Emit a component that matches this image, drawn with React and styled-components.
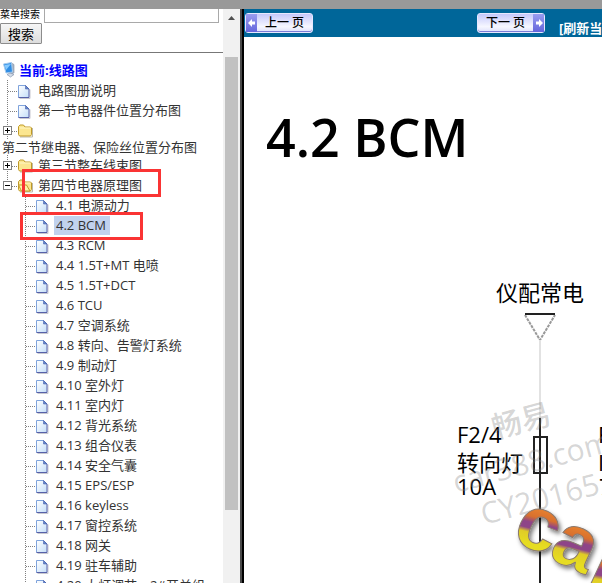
import React from 'react';
import styled, { createGlobalStyle, css } from 'styled-components';

const sections = [
  { id: 's0', title: '电路图册说明', type: 'page' },
  { id: 's1', title: '第一节电器件位置分布图', type: 'page' },
  { id: 's2', title: '第二节继电器、保险丝位置分布图', type: 'folder', wrap: true },
  { id: 's3', title: '第三节整车线束图', type: 'folder' },
  { id: 's4', title: '第四节电器原理图', type: 'folder', open: true, marked: true },
];

const diagrams = [
  '4.1 电源动力',
  '4.2 BCM',
  '4.3 RCM',
  '4.4 1.5T+MT 电喷',
  '4.5 1.5T+DCT',
  '4.6 TCU',
  '4.7 空调系统',
  '4.8 转向、告警灯系统',
  '4.9 制动灯',
  '4.10 室外灯',
  '4.11 室内灯',
  '4.12 背光系统',
  '4.13 组合仪表',
  '4.14 安全气囊',
  '4.15 EPS/ESP',
  '4.16 keyless',
  '4.17 窗控系统',
  '4.18 网关',
  '4.19 驻车辅助',
  '4.20 大灯调节、2#开关组',
];

const GlobalStyle = createGlobalStyle`
  * {
    box-sizing: border-box;
  }

  body {
    margin: 0;
    background: #fff;
    font-family: 'Open Sans', 'Noto Sans CJK SC', sans-serif;
    font-size: 13px;
    color: #333;
  }
`;

const Page = styled.div`
  height: 100vh;
  overflow: hidden;

  display: flex;
  flex-direction: column;
`;

const TopStrip = styled.div`
  flex: none;
  height: 9px;
  background: #999;
`;

const Frames = styled.div`
  flex: 1;
  min-height: 0;
  display: flex;
`;

const Sidebar = styled.aside`
  flex: none;
  width: 244px;
  display: flex;

  border-right: 2px solid #000;
  box-shadow: inset -2px 0 0 #4a4a4a;
  padding-right: 2px;
`;

const SidebarContent = styled.div`
  flex: 1;
  min-width: 0;
  overflow: hidden;
`;

const SearchForm = styled.form`
  margin-top: -8px;
  padding-bottom: 8px;
  border-bottom: 1px solid #777;

  & .field {
    display: flex;
    align-items: center;
    gap: 4px;
    height: 22px;
  }

  & label {
    flex: none;
    width: 40px;
    padding-top: 4px;
    font-size: 10px;
    line-height: 14px;
    color: #000;
    white-space: nowrap;
  }

  & input {
    width: 175px;
    height: 22px;
    padding: 0 4px;
    border: 1px solid #a9a9a9;
    background: #fff;
    outline: none;
  }
`;

const SearchButton = styled.button`
  display: block;
  width: 42px;
  height: 21px;
  padding: 0;

  border: 1px solid #8c8c8c;
  border-radius: 1px;
  background: linear-gradient(#f6f6f6, #dddddd);

  font-family: inherit;
  font-size: 13px;
  line-height: 18px;
  color: #000;
`;

const Tree = styled.ul`
  list-style: none;
  margin: 0;
  padding: 0;
`;

const TreeRoot = styled.a`
  display: flex;
  align-items: center;
  gap: 1px;
  height: 20px;
  margin: 6px 0 1px;
  padding-left: 2px;

  font-weight: 700;
  color: #0000ff;
  text-decoration: none;
`;

const TreeRow = styled.div`
  position: relative;
  display: flex;
  flex-wrap: wrap;
  align-items: center;
  min-height: 20px;
  padding-left: ${({ $level }) => ($level === 2 ? '18px' : '0')};
`;

const Joint = styled.span`
  flex: none;
  width: 18px;
  height: 20px;
  padding-top: 5px;
  padding-left: 3px;

  background:
    repeating-linear-gradient(#808080 0 1px, transparent 1px 2px) 7px 0 / 1px ${({ $last }) => ($last ? '12px' : '100%')} no-repeat,
    repeating-linear-gradient(90deg, #808080 0 1px, transparent 1px 2px) 8px 11px / 10px 1px no-repeat;
`;

const Toggle = styled.button`
  display: grid;
  place-items: center;
  width: 9px;
  height: 9px;
  margin-top: 1px;
  padding: 0;
  border: 1px solid #808080;
  background: #fff;
`;

const RowLink = styled.a`
  padding: 0 4px 0 2px;
  line-height: 19px;
  color: #333;
  text-decoration: none;
  white-space: nowrap;

  ${({ $selected }) =>
    $selected &&
    css`
      background: #c1d2ee;
    `}

  ${({ $wrap }) =>
    $wrap &&
    css`
      width: 100%;
      line-height: 15px;
    `}
`;

const Mark = styled.span`
  position: absolute;
  z-index: 1;
  height: 28px;
  border: 3px solid #fa3434;
  pointer-events: none;

  ${({ $kind }) =>
    $kind === 'section'
      ? css`
          top: -6px;
          left: 22px;
          width: 139px;
        `
      : css`
          top: -3px;
          left: 20px;
          width: 123px;
        `}
`;

const Scrollbar = styled.div`
  flex: none;
  width: 17px;
  padding: 0 2px;
  background: #f1f1f1;

  & .arrow {
    height: 48px;
    padding-top: 7px;
    text-align: center;
  }

  & .arrow svg {
    display: block;
    margin: 0 auto;
  }

  & .thumb {
    height: 79%;
    background: #c1c1c1;
  }
`;

const Main = styled.main`
  flex: 1;
  min-width: 0;
  overflow: hidden;
  background: #fff;
`;

const Toolbar = styled.nav`
  display: flex;
  align-items: center;
  height: 28px;
  padding-left: 1px;
  background: #006699;
  white-space: nowrap;

  & a {
    padding-top: 9px;
    font-size: 13px;
    font-weight: 700;
    line-height: 18px;
    color: #fff;
    text-decoration: none;
  }
`;

const PageButton = styled.button`
  flex: none;
  display: flex;
  flex-direction: ${({ $next }) => ($next ? 'row-reverse' : 'row')};
  align-items: stretch;
  width: 68px;
  height: 20px;
  padding: 0;
  margin-right: ${({ $next }) => ($next ? '14px' : '164px')};

  border: 1px solid #e6e8ff;
  border-radius: 3px;
  background: linear-gradient(#c5c8fb, #f6f7ff 70%, #dfe1fb);
  box-shadow: inset 0 -1px 0 #7c7cd6;

  font-family: inherit;
  font-size: 12px;
  font-weight: 500;
  line-height: 18px;
  color: #000;

  & .side {
    display: grid;
    place-items: center;
    width: 11px;
    background: linear-gradient(#9a9df0, #6465dc);
  }

  & .text {
    flex: 1;
  }
`;

const DiagramTitle = styled.h1`
  margin: 0;
  padding: 68px 22px 31px;

  font-size: 52px;
  font-weight: 600;
  line-height: 64px;
  color: #000;
  white-space: nowrap;
`;

const Schematic = styled.svg`
  display: block;
  overflow: visible;
  font-family: 'Open Sans', 'Noto Sans CJK SC', sans-serif;

  & .label {
    font-size: 22px;
    fill: #000;
  }

  & .watermark {
    font-size: 30px;
    font-weight: 500;
    fill: #808080;
    fill-opacity: 0.32;
  }

  & .logo {
    font-family: 'Liberation Sans', sans-serif;
    font-size: 76px;
    font-weight: 700;
    fill: url(#rainbow);
    stroke: #8a7a70;
    stroke-width: 1px;
  }
`;

const ComputerIcon = () => (
  <svg width="16" height="18" viewBox="0 0 16 18">
    <path d="M9.500 3l2.500 1.500v8l-3 3-1-3z" fill="#a9b4c4" stroke="#8490a5" strokeWidth=".6" />
    <path d="M1.500 4l8-1.500 1 9.500-6.500 1z" fill="#2f8de4" stroke="#a6cbee" />
    <path d="M2.500 5l6.500-1-5 6z" fill="#86caff" />
    <path d="M5 14.500l3-1.500 4 1.500-3.500 2.500z" fill="#d3dce8" stroke="#8596b0" strokeWidth=".7" />
  </svg>
);

const PageIcon = () => (
  <svg width="18" height="18" viewBox="0 0 18 18">
    <defs>
      <linearGradient id="sheet" x1="0" y1="0" x2="1" y2="1">
        <stop offset="0" stopColor="#fff" />
        <stop offset="1" stopColor="#c4def8" />
      </linearGradient>
    </defs>
    <path d="M1.500 17.500h10.500v-9" fill="none" stroke="#c8c8d0" />
    <path d="M.5 4.500h7l3.500 3.500v8.500H.5z" fill="url(#sheet)" />
    <path d="M.5 16.500v-12h7" fill="none" stroke="#7fa3dc" />
    <path d="M7.500 4.500l3.500 3.500v8.500H.5" fill="none" stroke="#5661a8" />
    <path d="M7.500 4.500v3.500h3.500z" fill="#6487cb" stroke="#4e65af" strokeWidth=".6" />
  </svg>
);

const FolderIcon = ({ open }) => (
  <svg width="18" height="18" viewBox="0 0 18 18">
    <path d="M2 16h12.500v-9" fill="none" stroke="#bcb9aa" />
    <path d="M.5 13.500V5.500l1.500-1.500h3.500l1.500 2h5.500l1 1v6.500l-1 1.500h-11z" fill="#fbe690" stroke="#c09a28" />
    <path d="M1.500 7h11" stroke="#fff6c4" />
    {open && <path d="M.5 9h8l3.500 6H3.500z" fill="#fff3a8" stroke="#c09a28" />}
  </svg>
);

const ToggleIcon = ({ open }) => (
  <svg width="7" height="7" viewBox="0 0 7 7">
    <path d={open ? 'M1 3.5h5' : 'M1 3.5h5M3.5 1v5'} stroke="#000" />
  </svg>
);

const ArrowIcon = ({ next }) => (
  <svg width="8" height="10" viewBox="0 0 8 10">
    <path d={next ? 'M8 5L4 1v2.500H1v3h3V9z' : 'M0 5l4-4v2.500h3v3H4V9z'} fill="#fff" />
  </svg>
);

const MenuTree = () => {
  return (
    <nav>
      <TreeRoot href="#root">
        <ComputerIcon />
        当前:线路图
      </TreeRoot>

      <Tree>
        {sections.map((item) => (
          <li key={item.id}>
            <TreeRow $level={1}>
              <Joint $last={item.open}>
                {item.type === 'folder' && (
                  <Toggle type="button" aria-label={item.title}>
                    <ToggleIcon open={item.open} />
                  </Toggle>
                )}
              </Joint>
              {item.type === 'folder' ? <FolderIcon open={item.open} /> : <PageIcon />}
              <RowLink href={`#${item.id}`} $wrap={item.wrap}>
                {item.title}
              </RowLink>
              {item.marked && <Mark $kind="section" />}
            </TreeRow>

            {item.open && (
              <Tree>
                {diagrams.map((title) => (
                  <li key={title}>
                    <TreeRow $level={2}>
                      <Joint />
                      <PageIcon />
                      <RowLink href="#diagram" $selected={title === '4.2 BCM'}>
                        {title}
                      </RowLink>
                      {title === '4.2 BCM' && <Mark $kind="diagram" />}
                    </TreeRow>
                  </li>
                ))}
              </Tree>
            )}
          </li>
        ))}
      </Tree>
    </nav>
  );
};

const WiringDiagram = () => {
  return (
    <Schematic width="100%" height="383">
      <defs>
        <linearGradient id="rainbow" x1="0.1" y1="1" x2="0" y2="0">
          <stop offset="0.2" stopColor="#e6dc20" />
          <stop offset="0.33" stopColor="#e0cc28" />
          <stop offset="0.38" stopColor="#8e4488" />
          <stop offset="0.45" stopColor="#8e4488" />
          <stop offset="0.52" stopColor="#d8702e" />
          <stop offset="0.7" stopColor="#f08a2c" />
        </linearGradient>
        <filter id="shade" x="-20%" y="-20%" width="140%" height="140%">
          <feDropShadow dx="2" dy="3" stdDeviation="2" floodColor="#000" floodOpacity="0.5" />
        </filter>
      </defs>

      {/* power supply */}
      <text className="label" x="252" y="101">仪配常电</text>
      <path d="M281 115l15 25 15-25" fill="none" stroke="#999" strokeWidth="2" strokeDasharray="3 1" />
      <path d="M281 114h30" stroke="#222" strokeWidth="2" />
      <path d="M296 140v78" stroke="#e2e2e2" strokeWidth="2" />

      {/* fuse */}
      <path d="M296 218v165" stroke="#222" strokeWidth="2" />
      <rect x="290" y="237" width="13" height="36" fill="none" stroke="#222" strokeWidth="2" />
      <text className="label" x="213" y="243">F2/4</text>
      <text className="label" x="213" y="271">转向灯</text>
      <text className="label" x="213" y="295">10A</text>

      <text className="label" x="354" y="243">F</text>
      <text className="label" x="354" y="271">I</text>
      <text className="label" x="355" y="295">7</text>

      <text className="watermark" transform="translate(251 239) rotate(-15)">畅易</text>
      <text className="watermark" transform="translate(212 293) rotate(-15)">car388.com</text>
      <text className="watermark" transform="translate(240 325) rotate(-15)">CY20165</text>

      <g filter="url(#shade)">
        <text className="logo" transform="translate(266 339) rotate(25)">c</text>
        <text className="logo" transform="translate(303 357) rotate(25)">a</text>
        <text className="logo" transform="translate(339 388) rotate(25)">r</text>
      </g>
    </Schematic>
  );
};

const App = () => {
  return (
    <Page>
      <GlobalStyle />
      <TopStrip />
      <Frames>
        <Sidebar>
          <SidebarContent>
            <SearchForm>
              <div className="field">
                <label htmlFor="keyword">菜单搜索</label>
                <input id="keyword" type="text" />
              </div>
              <SearchButton type="button">搜索</SearchButton>
            </SearchForm>
            <MenuTree />
          </SidebarContent>
          <Scrollbar>
            <div className="arrow">
              <svg width="7" height="4" viewBox="0 0 7 4">
                <path d="M0 4l3.500-4L7 4z" fill="#505050" />
              </svg>
            </div>
            <div className="thumb" />
          </Scrollbar>
        </Sidebar>

        <Main>
          <Toolbar>
            <PageButton type="button">
              <span className="side">
                <ArrowIcon />
              </span>
              <span className="text">上一 页</span>
            </PageButton>
            <PageButton type="button" $next>
              <span className="side">
                <ArrowIcon next />
              </span>
              <span className="text">下一 页</span>
            </PageButton>
            <a href="#refresh">[刷新当前页]</a>
          </Toolbar>
          <DiagramTitle>4.2 BCM</DiagramTitle>
          <WiringDiagram />
        </Main>
      </Frames>
    </Page>
  );
};

export default App;
